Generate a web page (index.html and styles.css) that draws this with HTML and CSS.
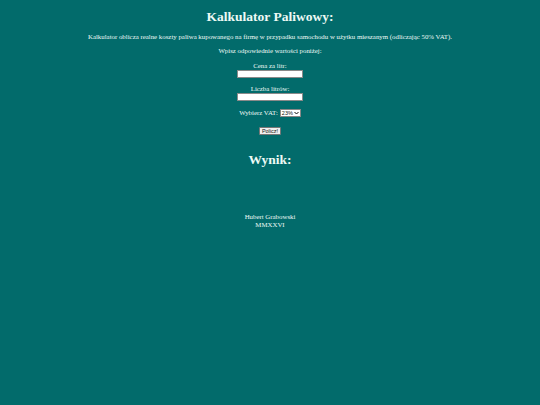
FILE: index.html
```html
<!DOCTYPE html>
<html lang="pl">
<head>
<meta charset="utf-8">
<title>Kalkulator Paliwowy</title>
<link rel="stylesheet" href="styles.css">
</head>
<body>
<main class="page">
  <h1 class="title">Kalkulator Paliwowy:</h1>
  <p class="text">Kalkulator oblicza realne koszty paliwa kupowanego na firmę w przypadku samochodu w użytku mieszanym (odliczając 50% VAT).</p>
  <p class="text">Wpisz odpowiednie wartości poniżej:</p>
  <form class="form">
    <label class="field">
      <span class="label">Cena za litr:</span>
      <input class="input" type="text">
    </label>
    <label class="field">
      <span class="label">Liczba litrów:</span>
      <input class="input" type="text">
    </label>
    <div class="vat-row">
      <span class="label">Wybierz VAT:</span>
      <span class="select"><span class="select-value">23%</span><svg class="chev" viewBox="0 0 6 4" width="5" height="4"><path d="M0.6 0.8 L3 3.2 L5.4 0.8" fill="none" stroke="#111" stroke-width="1.2"/></svg></span>
    </div>
    <div class="btn-row"><span class="button">Policz!</span></div>
  </form>
  <h2 class="result">Wynik:</h2>
  <footer class="footer">
    <div>Hubert Grabowski</div>
    <div>MMXXVI</div>
  </footer>
</main>
</body>
</html>
```
FILE: styles.css
```css
html, body {
  margin: 0;
  padding: 0;
  background: #026b6b;
}
body {
  font-family: "Liberation Serif", "Times New Roman", serif;
  font-size: 6.85px;
  color: #eefaf6;
  width: 540px;
  height: 405px;
}
.page {
  display: flex;
  flex-direction: column;
  align-items: center;
  text-align: center;
  padding-top: 9px;
}
.title {
  margin: 0;
  font-size: 13.5px;
  line-height: 16px;
  font-weight: bold;
}
.text {
  margin: 8px 0 0;
  line-height: 8px;
}
.text + .text {
  margin-top: 6px;
}
.form {
  display: flex;
  flex-direction: column;
  align-items: center;
  margin-top: 7px;
}
.field {
  display: flex;
  flex-direction: column;
  align-items: center;
}
.field + .field {
  margin-top: 7px;
}
.label {
  line-height: 8px;
}
.input {
  box-sizing: border-box;
  width: 66px;
  height: 8px;
  margin: 0;
  padding: 0;
  border: 1px solid #8a8a8a;
  background: #fff;
}
.vat-row {
  display: flex;
  align-items: center;
  gap: 2px;
  margin-top: 8px;
}
.select {
  box-sizing: border-box;
  display: flex;
  align-items: center;
  gap: 1px;
  height: 8px;
  padding: 0 1px 0 1px;
  background: #fff;
  border: 1px solid #888;
  color: #111;
  font-family: "Liberation Sans", Arial, sans-serif;
  font-size: 5.5px;
  line-height: 6px;
}
.btn-row {
  margin-top: 10px;
}
.button {
  box-sizing: border-box;
  display: inline-block;
  height: 8px;
  padding: 0 2px;
  background: #efefef;
  border: 1px solid #777;
  border-radius: 1px;
  color: #111;
  font-family: "Liberation Sans", Arial, sans-serif;
  font-size: 5.5px;
  line-height: 6px;
}
.result {
  margin: 17px 0 0;
  font-size: 13.5px;
  line-height: 16px;
  font-weight: bold;
}
.footer {
  margin-top: 45px;
  line-height: 8px;
}
```
